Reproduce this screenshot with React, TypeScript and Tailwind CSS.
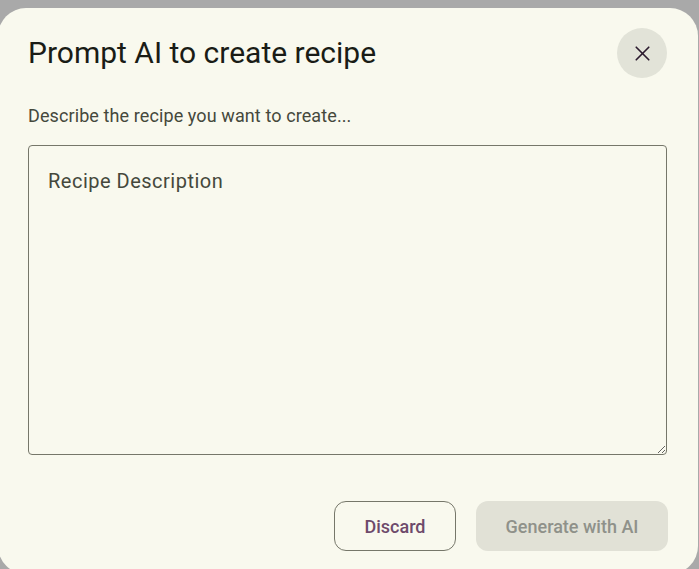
import { X } from "lucide-react";

export default function App() {
  return (
    <div className="h-[569px] w-[699px] overflow-hidden bg-[#a9a9a9] font-['Roboto',sans-serif]">
      <div className="ml-[-2px] mt-[8px] flex h-[566px] w-[700px] flex-col rounded-[28px] bg-[#f9f9ee] pl-[30px] pr-[31px]">
        <div className="flex items-center justify-between pt-[20px]">
          <h2 className="text-[30px] leading-[50px] text-[#1a1c16]">Prompt AI to create recipe</h2>
          <button className="flex h-[50px] w-[50px] items-center justify-center rounded-full bg-[#e2e3d8] text-[#2b1a2e]">
            <X size={25} strokeWidth={1.6} />
          </button>
        </div>
        <p className="mt-[25px] text-[18px] leading-[26px] tracking-[0.1px] text-[#45483c]">
          Describe the recipe you want to create...
        </p>
        <textarea
          placeholder="Recipe Description"
          className="mt-[16px] h-[310px] w-full resize-y rounded-[4px] border border-[#76776a] bg-transparent px-[19px] pt-[20px] text-[20px] leading-[30px] tracking-[0.5px] text-[#1a1c16] outline-none placeholder:text-[#45483c]"
        />
        <div className="mt-[46px] flex justify-end gap-[20px] pr-0">
          <button className="h-[50px] w-[122px] translate-x-[1px] rounded-[12px] border border-[#76776a] text-[18px] font-medium text-[#6e4a6b]">
            Discard
          </button>
          <button className="h-[50px] w-[192px] translate-x-[1px] rounded-[12px] bg-[#e1e1d6] text-[18px] font-medium text-[#8f918a]">
            Generate with AI
          </button>
        </div>
      </div>
    </div>
  );
}
